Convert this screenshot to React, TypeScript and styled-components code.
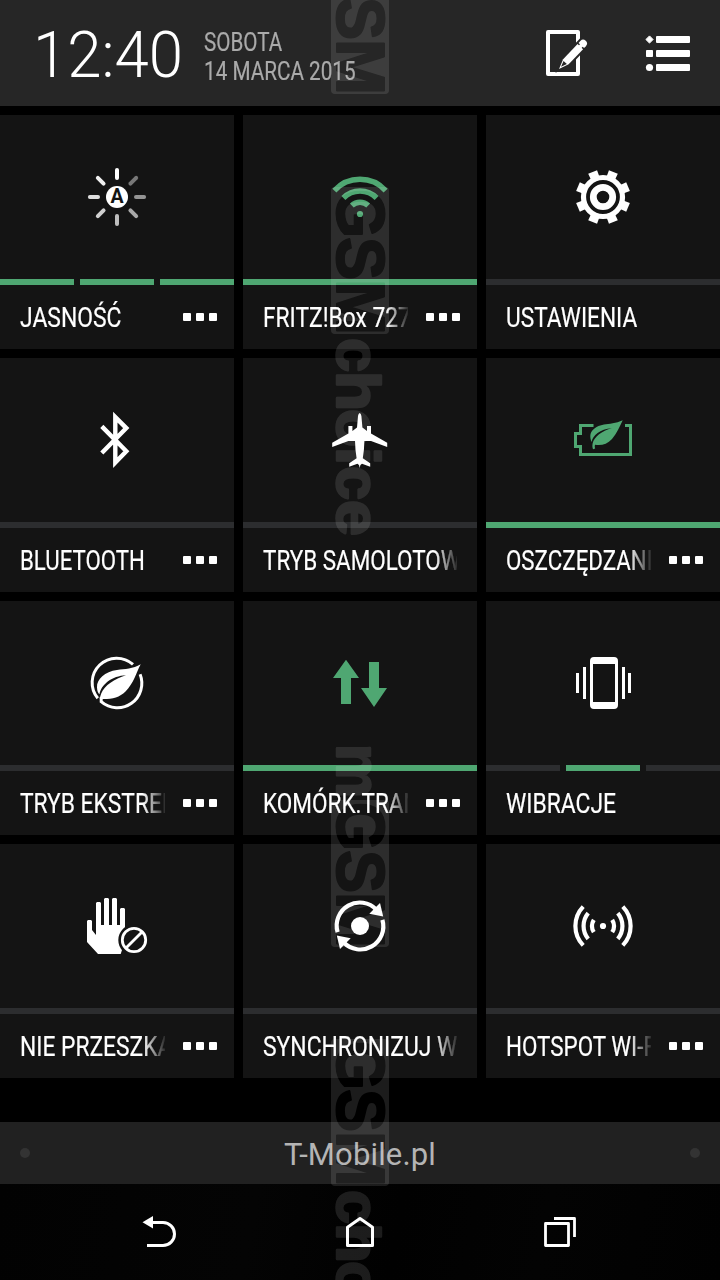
import React from 'react';
import styled, { createGlobalStyle, css } from 'styled-components';

const GREEN = '#4fa772';
const TILE = '#141414';
const OFF = '#2c2d2f';

const Global = createGlobalStyle`
  * { box-sizing: border-box; }
  body { margin: 0; background: #000; font-family: Roboto, "Liberation Sans", sans-serif; color: #fff; }
`;

const Screen = styled.main`
  position: relative;
  width: 720px;
  height: 1280px;
  overflow: hidden;
  background: #000;
  display: flex;
  flex-direction: column;
`;

const Header = styled.header`
  height: 106px;
  flex: none;
  display: flex;
  align-items: center;
  padding: 0 30px 0 33px;
  background: #262626;
`;

const Clock = styled.div`
  width: 171px;
  padding-top: 4px;
  font-size: 65px;
  font-weight: 300;
  line-height: 76px;
  white-space: nowrap;
`;

const DateBlock = styled.div`
  flex: 1;
  padding-top: 8px;
  font-size: 25px;
  line-height: 29px;
  color: #aaa;
  -webkit-text-stroke: 0.2px #aaa;
`;

const Condensed = styled.span<{ $scale?: number }>`
  display: block;
  width: max-content;
  white-space: nowrap;
  transform: scaleX(${(p) => p.$scale ?? 0.825});
  transform-origin: 0 50%;
`;

const HeaderActions = styled.div`
  display: flex;
  align-items: center;
  gap: 50px;
`;

const Grid = styled.section`
  display: grid;
  grid-template-columns: repeat(3, 234px);
  grid-auto-rows: 234px;
  gap: 9px;
  padding-top: 9px;
`;

const Tile = styled.article`
  display: flex;
  flex-direction: column;
  background: ${TILE};
`;

const IconArea = styled.div`
  height: 164px;
  display: flex;
  align-items: center;
  justify-content: center;
`;

const Bars = styled.div`
  display: flex;
  gap: 6px;
  height: 6px;
`;

const Bar = styled.div<{ $on: boolean }>`
  flex: 1;
  background: ${(p) => (p.$on ? GREEN : OFF)};
`;

const LabelRow = styled.div<{ $menu: boolean }>`
  flex: 1;
  display: flex;
  align-items: center;
  gap: 18px;
  padding: 0 ${(p) => (p.$menu ? 17 : 20)}px 0 20px;
`;

const Label = styled.div<{ $fade: boolean }>`
  flex: 1;
  min-width: 0;
  overflow: hidden;
  padding-top: 2px;
  font-size: 27.5px;
  line-height: 40px;
  -webkit-text-stroke: 0.2px #fff;
  ${(p) =>
    p.$fade &&
    css`
      mask-image: linear-gradient(to right, #000 calc(100% - 22px), rgba(0, 0, 0, 0.1));
    `}
`;

const Menu = styled.div`
  display: flex;
  gap: 5px;
`;

const MenuDot = styled.i`
  width: 8px;
  height: 8px;
  border-radius: 1px;
  background: #fff;
`;

const Carrier = styled.div`
  height: 62px;
  flex: none;
  margin-top: 44px;
  padding: 0 20px;
  display: flex;
  align-items: center;
  justify-content: space-between;
  background: #212121;
  color: #b4b4b4;
  font-size: 31px;
`;

const CarrierName = styled.span`
  padding-top: 2px;
  letter-spacing: 0.15px;
`;

const CarrierDot = styled.i`
  width: 10px;
  height: 10px;
  border-radius: 50%;
  background: #333;
`;

const NavBar = styled.nav`
  flex: 1;
  display: flex;
  justify-content: center;
  background: linear-gradient(100deg, #020202, #040404 35%, #010101 55%, #030303 75%, #010101);
`;

const NavItem = styled.div`
  width: 200px;
  display: flex;
  align-items: center;
  justify-content: center;
`;

const Overlay = styled.svg`
  position: absolute;
  inset: 0;
  pointer-events: none;
`;

const Svg = ({ children }: { children: React.ReactNode }) => (
  <svg width="80" height="80" viewBox="0 0 80 80" fill="#fff">
    {children}
  </svg>
);

const RAYS = ['#fff', '#787878', '#949494', '#a8a8a8', '#bebebe', '#d0d0d0', '#dedede', '#f0f0f0'];

const Brightness = () => (
  <Svg>
    {RAYS.map((c, i) => (
      <path key={i} d="M40 12.9V21" stroke={c} strokeWidth="4" strokeLinecap="round" transform={`rotate(${i * 45} 40 40)`} />
    ))}
    <circle cx="40" cy="40" r="11" />
    <text x="40" y="46.3" fontSize="19.5" fontWeight="700" textAnchor="middle" fill={TILE}>A</text>
  </Svg>
);

const Wifi = () => (
  <Svg>
    <g fill="none" stroke={GREEN} strokeWidth="5.5">
      <path d="M14.4 33.6A34.7 34.7 0 0 1 65.6 33.6" />
      <path d="M23.4 41A23.2 23.2 0 0 1 56.6 41" />
      <path d="M31.8 48.6A11.8 11.8 0 0 1 48.2 48.6" />
    </g>
    <circle cx="40" cy="57" r="3.1" fill={GREEN} />
  </Svg>
);

const Gear = () => (
  <Svg>
    <circle cx="40" cy="40" r="19.5" fill="none" stroke="#fff" strokeWidth="5.2" />
    {Array.from({ length: 8 }, (_, i) => (
      <path key={i} d="M35.2 12.9H44.8L44.4 20H35.6Z" transform={`rotate(${22.5 + i * 45} 40 40)`} />
    ))}
    <circle cx="40" cy="40" r="9.7" fill="none" stroke="#fff" strokeWidth="6.8" />
  </Svg>
);

const Bluetooth = () => (
  <Svg>
    <path d="M24.8 26.4L49.3 51.3L38.3 62.5V17.1L49.3 28.1L24.8 53" fill="none" stroke="#fff" strokeWidth="4.4" />
  </Svg>
);

const Plane = () => (
  <Svg>
    <path d="M39.7 13Q41 13.4 41.4 16L42.4 27.5L47 31V26H51V33.5L67.2 42.8V47L51 41H44.4Q44.2 50 42.8 58.3L50.2 63.3V66.8L42 63.7L40.4 65L39.7 68L39 65L37.4 63.7L29.2 66.8V63.3L36.6 58.3Q35.2 50 35 41H28.4L12.2 47V42.8L28.4 33.5V26H32.4V31L37 27.5L38 16Q38.4 13.4 39.7 13Z" />
  </Svg>
);

const BatteryLeaf = () => (
  <Svg>
    <path d="M30.5 25.6H17.5V33.4H12.5V46.6H17.5V54.5H67.5V25.6H62" fill="none" stroke={GREEN} strokeWidth="3" />
    <path
      fill={GREEN}
      d="M59.7 20.3C53 23.5 46 23.8 41 24.6C33 26 27.4 30.5 27.3 36C27.3 38.6 28 41 28.7 42C29.5 35.5 37 29 48.8 28.2C39 30.5 31 37 29.6 43.5C29.1 45.7 29.5 48 30.1 49.3L32.2 48.6C31.6 47.2 31.7 46 32 44.8C38.5 45.8 44 44.4 49 39C54 33.5 56.7 26.5 59.7 20.3Z"
    />
  </Svg>
);

const Eco = () => (
  <Svg>
    <g fill="none" stroke="#fff" strokeWidth="3">
      <path d="M56 21.4A24.5 24.5 0 0 0 20.8 55.3" />
      <path d="M63.1 31.2A24.5 24.5 0 0 1 24.2 58.7V54" />
    </g>
    <path d="M63.7 21.3C56 26 48 26 40 27C28 28.3 19.5 36.5 20 44.3C20.1 48 21 50 22.5 51.3C24 41.5 35 32.8 49 32.2C37.5 35.5 27.5 42.5 24.2 50.5C23.5 52.7 23 54 22.8 56C34 56.5 42 55 48.5 48.5C57 40 59 30 63.7 21.3Z" />
  </Svg>
);

const DataArrows = () => (
  <Svg>
    <path fill={GREEN} d="M26 16.7L39 35H31V61H21V35H13ZM49 19H59V45H67L54 64L41 45H49Z" />
  </Svg>
);

const Vibrate = () => (
  <Svg>
    <path fillRule="evenodd" d="M31 14H51A4 4 0 0 1 55 18V62A4 4 0 0 1 51 66H31A4 4 0 0 1 27 62V18A4 4 0 0 1 31 14ZM30 21V59H52V21Z" />
    <path d="M13 30h3v20h-3zM20 24h3v32h-3zM59 24h3v32h-3zM65 30h3v20h-3z" />
  </Svg>
);

const Hand = () => (
  <Svg>
    <path d="M11 34H14L15 35V44L19 49V17L20 16H23L24 17V39H27V13L28 12H31L32 13V39H35V13L36 12H39L40 13V39H43V23L44 22H47L48 23V46L45 64L43.7 68H21L10 56V35Z" />
    <circle cx="57" cy="54" r="15.7" fill={TILE} />
    <circle cx="57" cy="54" r="11.7" fill="none" stroke="#fff" strokeWidth="2.8" />
    <path d="M49 62L65 46" stroke="#fff" strokeWidth="2.8" />
  </Svg>
);

const Sync = () => (
  <Svg>
    <circle cx="40" cy="40" r="9" />
    {[0, 180].map((a) => (
      <g key={a} transform={`rotate(${a} 40 40)`}>
        <path d="M17.6 46.1A23.1 23.1 0 0 1 56.5 23.7" fill="none" stroke="#fff" strokeWidth="4.2" />
        <path d="M60 17L63.2 30.4L49.3 27.7Z" />
      </g>
    ))}
  </Svg>
);

const Hotspot = () => (
  <Svg>
    <circle cx="40" cy="40" r="3.1" />
    {[0, 180].map((a) => (
      <g key={a} transform={`rotate(${a} 40 40)`} fill="none" stroke="#fff" strokeWidth="4.2">
        <path d="M20.2 20.6A28 28 0 0 0 20.2 59.4" />
        <path d="M25.2 27.2A20 20 0 0 0 25.2 52.8" />
        <path d="M30.8 33.8A12 12 0 0 0 30.8 46.2" />
      </g>
    ))}
  </Svg>
);

type TileData = {
  label: string;
  icon: React.FC;
  bars: boolean[];
  menu?: boolean;
  fade?: boolean;
  scale?: number;
};

const TILES: TileData[] = [
  { label: 'JASNOŚĆ', icon: Brightness, bars: [true, true, true], menu: true, scale: 0.832 },
  { label: 'FRITZ!Box 727', icon: Wifi, bars: [true], menu: true, fade: true, scale: 0.828 },
  { label: 'USTAWIENIA', icon: Gear, bars: [false], scale: 0.824 },
  { label: 'BLUETOOTH', icon: Bluetooth, bars: [false], menu: true, scale: 0.808 },
  { label: 'TRYB SAMOLOTOW', icon: Plane, bars: [false], fade: true, scale: 0.816 },
  { label: 'OSZCZĘDZANIE', icon: BatteryLeaf, bars: [true], menu: true, fade: true, scale: 0.812 },
  { label: 'TRYB EKSTREMALNY', icon: Eco, bars: [false], menu: true, fade: true, scale: 0.828 },
  { label: 'KOMÓRK.TRANSMISJA', icon: DataArrows, bars: [true], menu: true, fade: true, scale: 0.82 },
  { label: 'WIBRACJE', icon: Vibrate, bars: [false, true, false], scale: 0.831 },
  { label: 'NIE PRZESZKADZAĆ', icon: Hand, bars: [false], menu: true, fade: true, scale: 0.828 },
  { label: 'SYNCHRONIZUJ W', icon: Sync, bars: [false], fade: true, scale: 0.832 },
  { label: 'HOTSPOT WI-FI', icon: Hotspot, bars: [false], menu: true, fade: true, scale: 0.814 },
];

const NoteIcon = () => (
  <svg width="48" height="50" viewBox="0 0 48 50">
    <path d="M4 4H34V46H4Z" fill="none" stroke="#fff" strokeWidth="4" strokeLinejoin="round" />
    <g transform="translate(15 41) rotate(-46.5)">
      <path d="M9 -3.8H38V3.8H9L0 0Z" fill="#fff" stroke="#262626" strokeWidth="4" />
      <path d="M0 0L10 -3.8H31V3.8H10Z" fill="#fff" />
      <path d="M3 0L9 -2.3V2.3Z" fill="#262626" />
      <path d="M32.4 -3.8H35A3.8 3.8 0 0 1 35 3.8H32.4Z" fill="#fff" />
    </g>
  </svg>
);

const ListIcon = () => (
  <svg width="48" height="50" viewBox="0 0 48 50" fill="#fff">
    <rect x="14" y="8" width="34" height="7" rx="1" />
    <rect x="14" y="22" width="34" height="7" rx="1" />
    <rect x="14" y="36" width="34" height="7" rx="1" />
    <path d="M7.5 7.9L11.1 11.5L7.5 15.1L3.9 11.5Z" stroke="#fff" strokeWidth="1" strokeLinejoin="round" />
    <rect x="4" y="22" width="7" height="7" rx="0.8" />
    <circle cx="7.5" cy="39.5" r="3.6" />
  </svg>
);

const BackIcon = () => (
  <svg width="40" height="40" viewBox="0 0 40 40">
    <path d="M12 10.5H23A11.5 11.5 0 0 1 23 33.5H7" fill="none" stroke="#fff" strokeWidth="3" />
    <path d="M2.5 10.3L13 4V16.5Z" fill="#fff" />
  </svg>
);

const HomeIcon = () => (
  <svg width="40" height="40" viewBox="0 0 40 40">
    <path d="M7.5 33.5V15.3L20 6.5L32.5 15.3V33.5Z" fill="none" stroke="#fff" strokeWidth="3" strokeLinejoin="round" />
  </svg>
);

const RecentIcon = () => (
  <svg width="40" height="40" viewBox="0 0 40 40" fill="none" stroke="#fff" strokeWidth="2.8" strokeLinejoin="round">
    <path d="M5.5 11.5H28.5V33.5H5.5Z" />
    <path d="M14 6.5H34.5V25" />
  </svg>
);

type GlyphRun = [string, number, number];

const markFont = { fontFamily: '"Liberation Sans", sans-serif', fontWeight: 700 } as const;

// Each glyph carries its start offset along the mark and its drawn length.
const Glyphs = ({ runs, size }: { runs: GlyphRun[]; size: number }) => (
  <>
    {runs.map(([g, x, len], i) => (
      <text key={i} x={x} y="0" fontSize={size} textLength={len} lengthAdjust="spacingAndGlyphs" {...markFont}>
        {g}
      </text>
    ))}
  </>
);

const Mark = ({ top, lead, tail }: { top: number; lead?: boolean; tail?: boolean }) => (
  <g transform={`translate(337 ${top}) rotate(90)`} fill="#fff" stroke="#fff" strokeWidth="2.4" strokeLinejoin="round">
    {lead && <Glyphs size={63} runs={[['m', -56, 54]]} />}
    <rect x="0" y="-52" width="147" height="58" rx="4" mask="url(#gsm)" stroke="none" />
    {tail && (
      <Glyphs size={61} runs={[['c', 151, 34], ['h', 184, 40], ['o', 222, 38], ['i', 260, 18], ['c', 279, 34], ['e', 313, 36]]} />
    )}
  </g>
);

const Watermark = () => (
  <Overlay width="720" height="1280" viewBox="0 0 720 1280">
    <defs>
      <mask id="gsm" maskUnits="userSpaceOnUse" x="0" y="-60" width="150" height="70">
        <rect x="0" y="-60" width="150" height="70" fill="#fff" />
        <g fill="#000" stroke="#000" strokeWidth="2" strokeLinejoin="round">
          <Glyphs size={69} runs={[['G', 2, 49], ['S', 50, 43], ['M', 92, 56]]} />
        </g>
      </mask>
    </defs>
    <g opacity="0.11">
      <Mark top={-53} />
      <Mark top={187} tail />
      <Mark top={800} lead />
      <Mark top={1039} tail />
    </g>
  </Overlay>
);

export default function App() {
  return (
    <>
      <Global />
      <Screen>
        <Header>
          <Clock>
            <Condensed $scale={0.95}>12:40</Condensed>
          </Clock>
          <DateBlock>
            <Condensed>SOBOTA</Condensed>
            <Condensed $scale={0.828}>14 MARCA 2015</Condensed>
          </DateBlock>
          <HeaderActions>
            <NoteIcon />
            <ListIcon />
          </HeaderActions>
        </Header>
        <Grid>
          {TILES.map(({ label, icon: Icon, bars, menu, fade, scale }) => (
            <Tile key={label}>
              <IconArea>
                <Icon />
              </IconArea>
              <Bars>
                {bars.map((on, i) => (
                  <Bar key={i} $on={on} />
                ))}
              </Bars>
              <LabelRow $menu={!!menu}>
                <Label $fade={!!fade}>
                  <Condensed $scale={scale}>{label}</Condensed>
                </Label>
                {menu && (
                  <Menu>
                    <MenuDot />
                    <MenuDot />
                    <MenuDot />
                  </Menu>
                )}
              </LabelRow>
            </Tile>
          ))}
        </Grid>
        <Carrier>
          <CarrierDot />
          <CarrierName>T-Mobile.pl</CarrierName>
          <CarrierDot />
        </Carrier>
        <NavBar>
          <NavItem><BackIcon /></NavItem>
          <NavItem><HomeIcon /></NavItem>
          <NavItem><RecentIcon /></NavItem>
        </NavBar>
        <Watermark />
      </Screen>
    </>
  );
}
